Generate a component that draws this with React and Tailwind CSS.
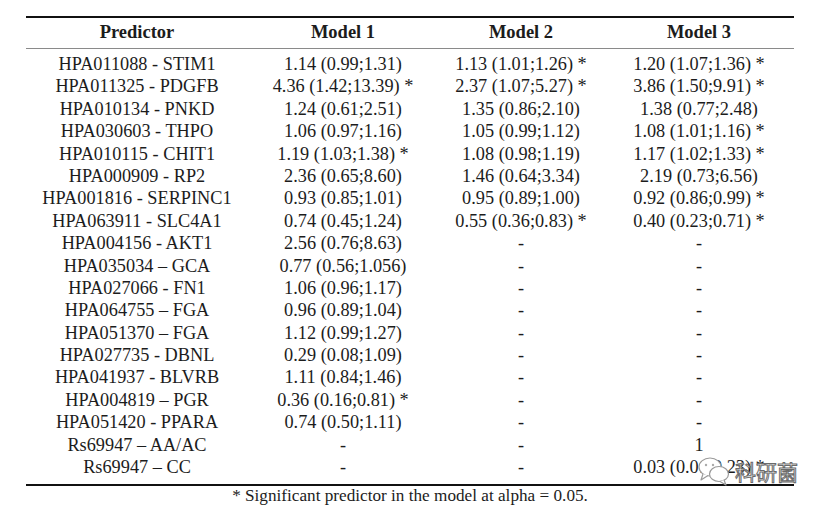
const rows = [
  ["HPA011088 - STIM1", "1.14 (0.99;1.31)", "1.13 (1.01;1.26) *", "1.20 (1.07;1.36) *"],
  ["HPA011325 - PDGFB", "4.36 (1.42;13.39) *", "2.37 (1.07;5.27) *", "3.86 (1.50;9.91) *"],
  ["HPA010134 - PNKD", "1.24 (0.61;2.51)", "1.35 (0.86;2.10)", "1.38 (0.77;2.48)"],
  ["HPA030603 - THPO", "1.06 (0.97;1.16)", "1.05 (0.99;1.12)", "1.08 (1.01;1.16) *"],
  ["HPA010115 - CHIT1", "1.19 (1.03;1.38) *", "1.08 (0.98;1.19)", "1.17 (1.02;1.33) *"],
  ["HPA000909 - RP2", "2.36 (0.65;8.60)", "1.46 (0.64;3.34)", "2.19 (0.73;6.56)"],
  ["HPA001816 - SERPINC1", "0.93 (0.85;1.01)", "0.95 (0.89;1.00)", "0.92 (0.86;0.99) *"],
  ["HPA063911 - SLC4A1", "0.74 (0.45;1.24)", "0.55 (0.36;0.83) *", "0.40 (0.23;0.71) *"],
  ["HPA004156 - AKT1", "2.56 (0.76;8.63)", "-", "-"],
  ["HPA035034 – GCA", "0.77 (0.56;1.056)", "-", "-"],
  ["HPA027066 - FN1", "1.06 (0.96;1.17)", "-", "-"],
  ["HPA064755 – FGA", "0.96 (0.89;1.04)", "-", "-"],
  ["HPA051370 – FGA", "1.12 (0.99;1.27)", "-", "-"],
  ["HPA027735 - DBNL", "0.29 (0.08;1.09)", "-", "-"],
  ["HPA041937 - BLVRB", "1.11 (0.84;1.46)", "-", "-"],
  ["HPA004819 – PGR", "0.36 (0.16;0.81) *", "-", "-"],
  ["HPA051420 - PPARA", "0.74 (0.50;1.11)", "-", "-"],
  ["Rs69947 – AA/AC", "-", "-", "1"],
  ["Rs69947 – CC", "-", "-", "0.03 (0.01;0.23) *"],
];

const headers = ["Predictor", "Model 1", "Model 2", "Model 3"];
const cols = "grid grid-cols-[222px_190px_166px_190px]";

// watermark stamped over the last row, as in the source image
const Watermark = () => (
  <div className="absolute left-[697px] top-[455px] flex items-center gap-[4px]">
    <svg width="34" height="32" viewBox="0 0 34 32" fill="none">
      <ellipse cx="13" cy="12" rx="11" ry="9" fill="white" stroke="#9a9a9a" strokeWidth="1.2" />
      <path d="M6 19 L4 25 L11 20.5" fill="white" stroke="#9a9a9a" strokeWidth="1.2" strokeLinejoin="round" />
      <ellipse cx="22" cy="19" rx="9.5" ry="7.5" fill="white" stroke="#9a9a9a" strokeWidth="1.2" />
      <path d="M27 25 L29 30 L23 26.4" fill="white" stroke="#9a9a9a" strokeWidth="1.2" strokeLinejoin="round" />
      <circle cx="9" cy="10" r="1.2" fill="#aaa" />
      <circle cx="16" cy="10" r="1.2" fill="#aaa" />
    </svg>
    <span className="font-['Noto_Sans_CJK_SC',sans-serif] text-[21px] leading-none text-white [-webkit-text-stroke:1px_#6b6b6b]">
      科研菌
    </span>
  </div>
);

export default function App() {
  return (
    <div className="relative h-[510px] w-[823px] overflow-hidden bg-white font-['Liberation_Serif',serif] text-[#1c1c1c]">
      <div className="ml-[26px] mt-[16px] w-[768px]">
        <div className={`${cols} h-[33px] items-center border-t-2 border-b border-t-[#111] border-b-[#8a8a8a] text-[18.5px] font-bold`}>
          {headers.map((h) => (
            <div key={h} className="text-center">{h}</div>
          ))}
        </div>
        <div className="border-b-2 border-[#111] pb-[6px] pt-[4px]">
          {rows.map((r) => (
            <div key={r[0]} className={`${cols} h-[22.4px] items-center text-[18.3px] leading-[22.4px]`}>
              {r.map((c, i) => (
                <div key={i} className="text-center whitespace-nowrap">{c}</div>
              ))}
            </div>
          ))}
        </div>
        <p className="text-center text-[17.2px] leading-[19px]">
          * Significant predictor in the model at alpha = 0.05.
        </p>
      </div>
      <Watermark />
    </div>
  );
}
